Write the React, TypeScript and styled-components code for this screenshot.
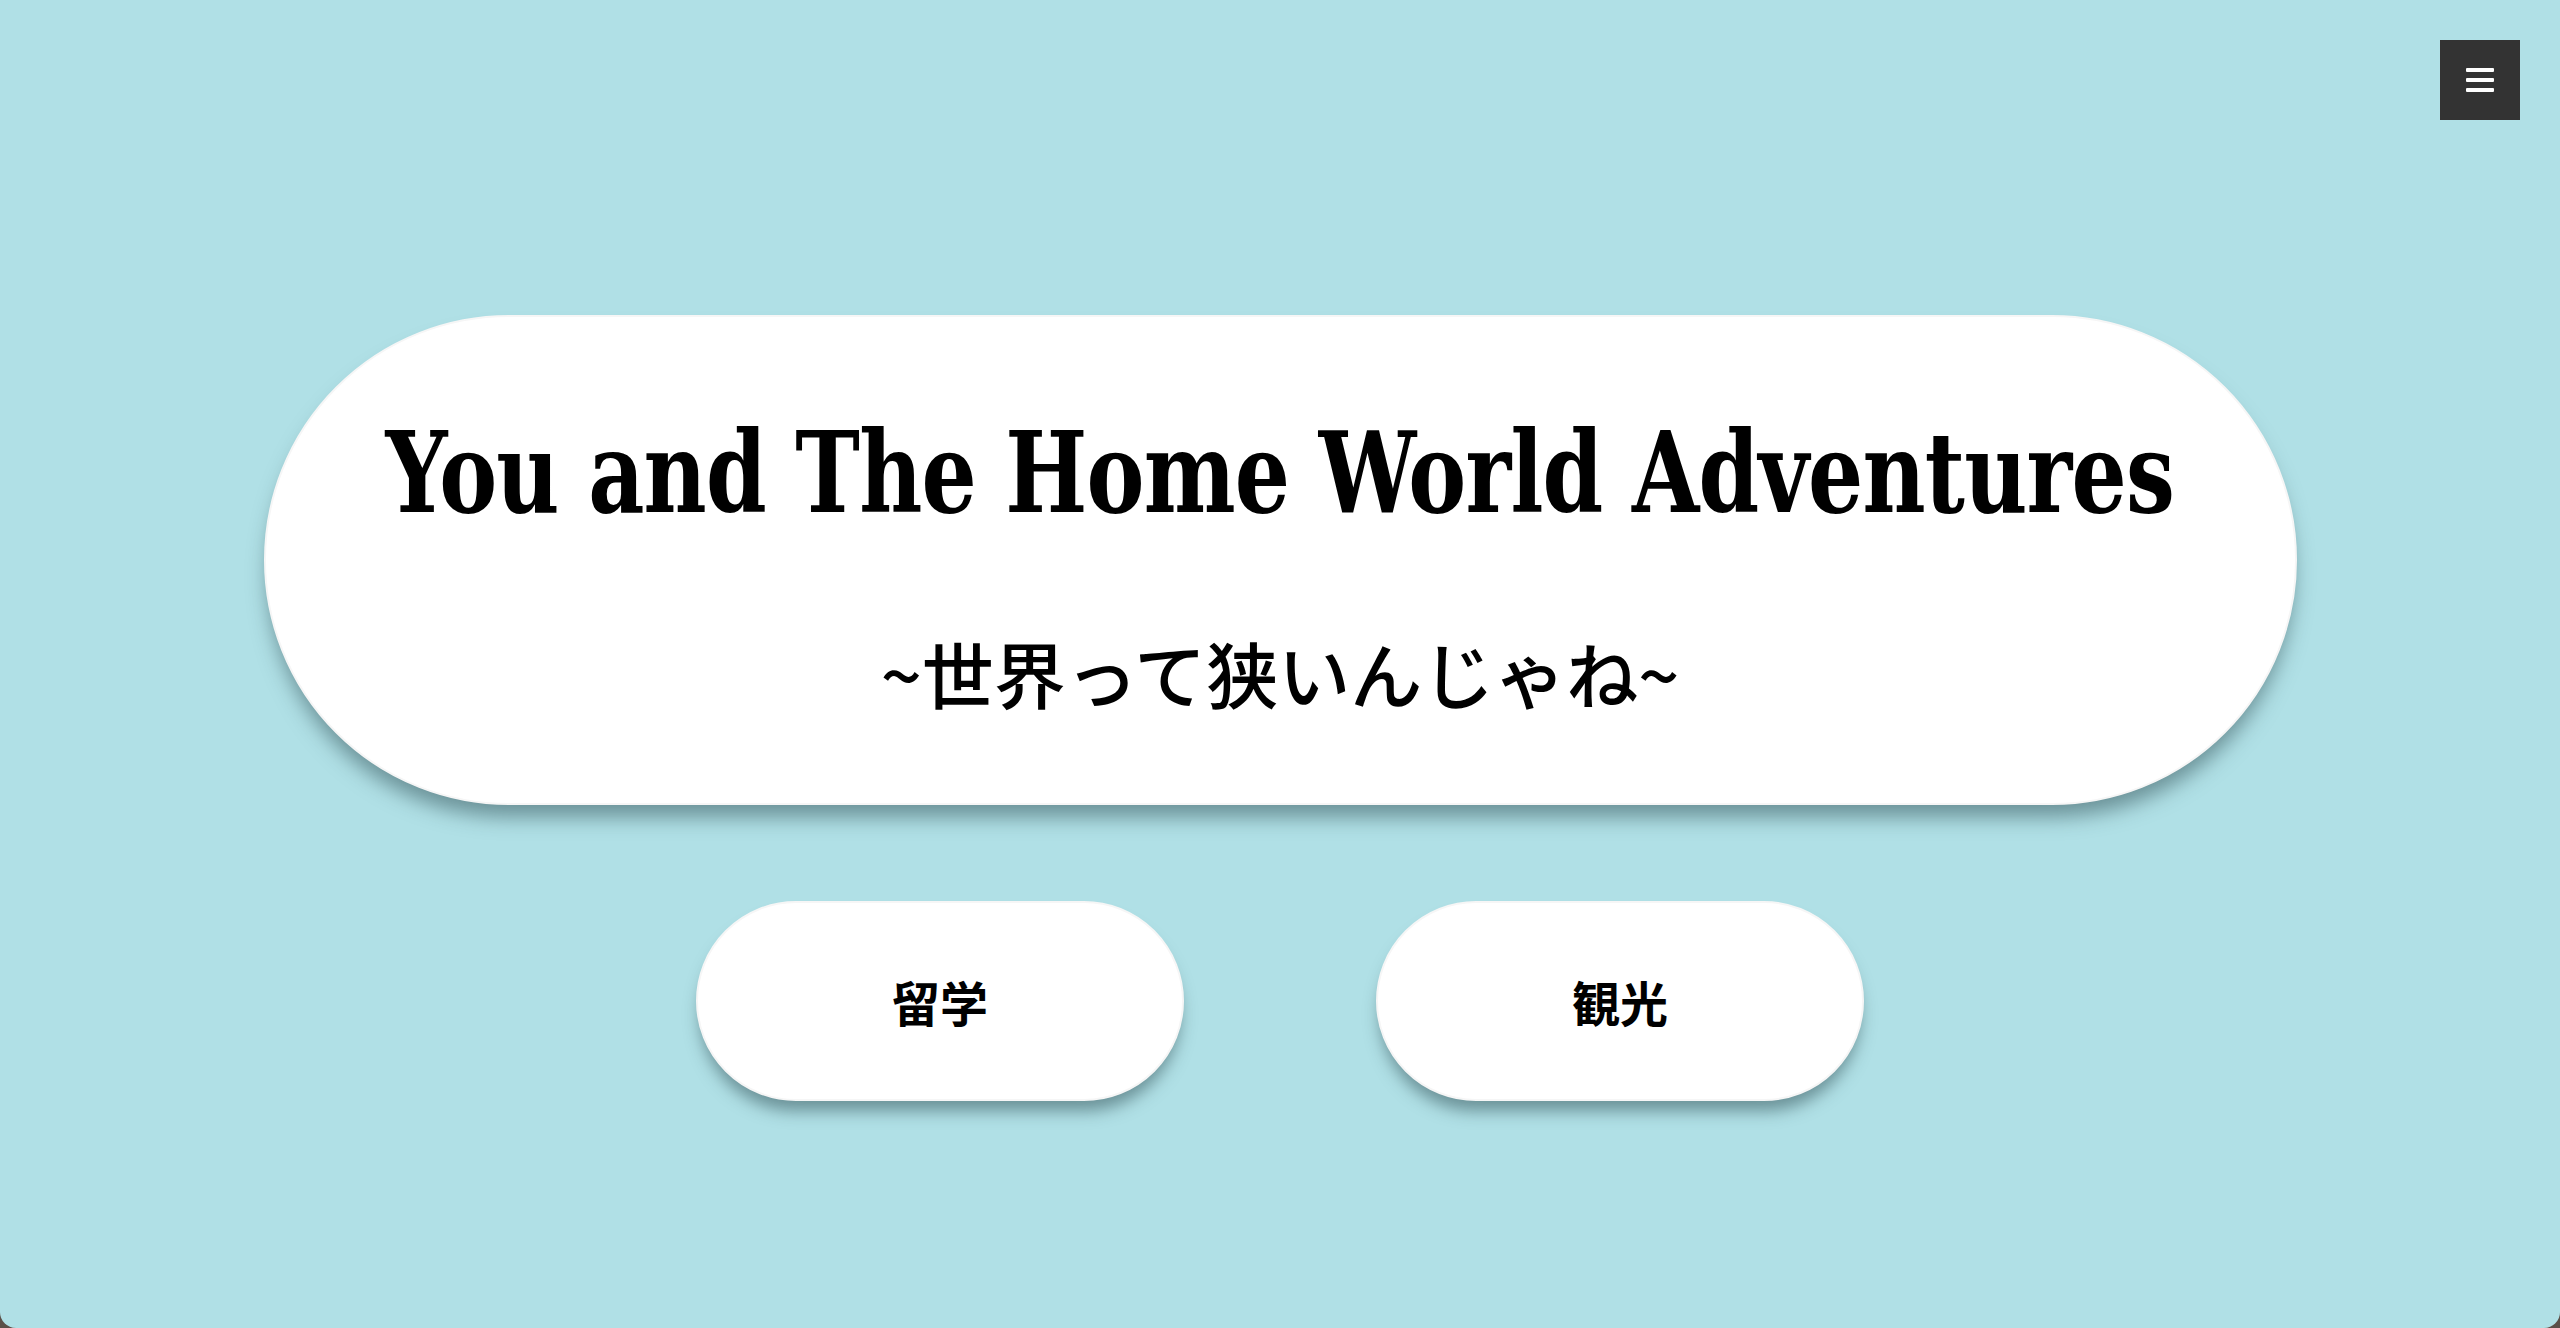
import React from "react";
import styled, { createGlobalStyle } from "styled-components";

const GlobalStyle = createGlobalStyle`
  html, body {
    margin: 0;
    padding: 0;
    background: #5b5049;
  }
  * { box-sizing: border-box; }
`;

const Page = styled.div`
  min-height: 100vh;
  background: powderblue;
  border-radius: 0 0 16px 16px;
  padding: 40px 40px 0;
  display: flex;
  flex-direction: column;
  font-family: "Noto Sans CJK JP", "Noto Sans", sans-serif;
`;

const Header = styled.header`
  display: flex;
  justify-content: flex-end;
`;

const MenuButton = styled.button`
  width: 80px;
  height: 80px;
  background: #333333;
  border: none;
  padding: 0;
  display: flex;
  flex-direction: column;
  align-items: center;
  justify-content: center;
  gap: 5.5px;
  cursor: pointer;
`;

const MenuBar = styled.span`
  display: block;
  width: 28px;
  height: 4.5px;
  border-radius: 1px;
  background: #ffffff;
`;

const Main = styled.main`
  display: flex;
  flex-direction: column;
  align-items: center;
  margin-top: 195px;
  gap: 96px;
`;

const Hero = styled.section`
  width: 2033px;
  height: 490px;
  background: #ffffff;
  border: 2px solid #f6f6f6;
  border-radius: 245px;
  box-shadow: 0 16px 20px -4px rgba(40, 70, 75, 0.5);
  display: flex;
  flex-direction: column;
  align-items: center;
  padding-top: 86px;
`;

const Title = styled.h1`
  margin: 0;
  font-family: "DejaVu Serif", serif;
  font-weight: bold;
  font-size: 112px;
  letter-spacing: -1px;
  line-height: 140px;
  white-space: nowrap;
  text-align: center;
  color: #000000;
  transform: scaleX(0.775);
`;

const Subtitle = styled.p`
  margin: 84px 0 0;
  font-family: "Noto Sans CJK JP", sans-serif;
  font-weight: 500;
  font-size: 72px;
  line-height: 90px;
  white-space: nowrap;
  color: #000000;
`;

const ButtonRow = styled.nav`
  display: flex;
  gap: 192px;
`;

const PillButton = styled.button`
  width: 488px;
  height: 200px;
  background: #ffffff;
  border: 2px solid #f6f6f6;
  border-radius: 100px;
  box-shadow: 0 14px 16px -4px rgba(40, 70, 75, 0.5);
  font-family: "Noto Sans CJK JP", sans-serif;
  font-weight: 700;
  font-size: 48px;
  color: #000000;
  cursor: pointer;
`;

export default function App() {
  return (
    <>
      <GlobalStyle />
      <Page>
        <Header>
          <MenuButton aria-label="menu">
            <MenuBar />
            <MenuBar />
            <MenuBar />
          </MenuButton>
        </Header>
        <Main>
          <Hero>
            <Title>You and The Home World Adventures</Title>
            <Subtitle>~世界って狭いんじゃね~</Subtitle>
          </Hero>
          <ButtonRow>
            <PillButton>留学</PillButton>
            <PillButton>観光</PillButton>
          </ButtonRow>
        </Main>
      </Page>
    </>
  );
}
